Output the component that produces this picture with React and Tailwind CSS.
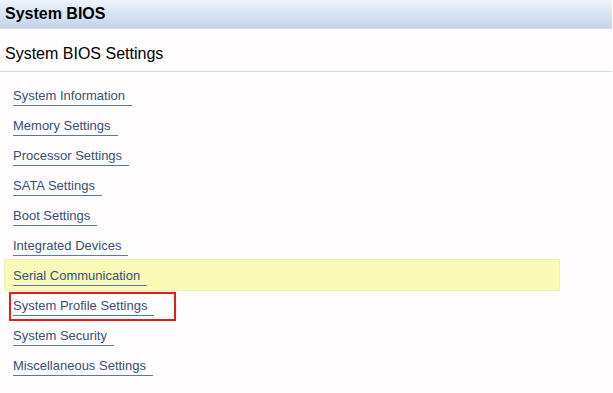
const items = [
  "System Information",
  "Memory Settings",
  "Processor Settings",
  "SATA Settings",
  "Boot Settings",
  "Integrated Devices",
  "Serial Communication",
  "System Profile Settings",
  "System Security",
  "Miscellaneous Settings",
];

const HIGHLIGHT = 6;
const FOCUSED = 7;

export default function App() {
  return (
    <div
      className="h-[393px] w-[613px] bg-[#fffdfe] text-black"
      style={{ fontFamily: '"Liberation Sans", Arial, sans-serif' }}
    >
      <div className="w-[612px]">
        <header className="h-[29px] bg-gradient-to-b from-[#eef4fb] to-[#c3d4ea] border-b border-[#d6dbe3] px-[5px] text-[16px] font-bold leading-[28px]">
          System BIOS
        </header>

        <div className="border-b border-[#d9d9d9] px-[5px] pt-[15px] pb-[7px] text-[16px] leading-[20px]">
          System BIOS Settings
        </div>

        <ul className="px-[5px] pt-[8px]">
          {items.map((label, i) => (
            <li
              key={label}
              className={
                i === HIGHLIGHT
                  ? "relative h-[30px] w-[554px] bg-[#f8fab6] outline outline-1 outline-[#eef1a6] pl-[8px]"
                  : "relative h-[30px] pl-[8px]"
              }
            >
              <span className="inline-block border-b border-[#5a78a6] pr-[7px] pt-[6px] text-[13px] leading-[19px] text-[#394f77]">
                {label}
              </span>
              {i === FOCUSED && (
                <span className="absolute left-[4px] top-[2px] h-[29px] w-[167px] border-2 border-[#e31d1d]" />
              )}
            </li>
          ))}
        </ul>
      </div>
    </div>
  );
}
